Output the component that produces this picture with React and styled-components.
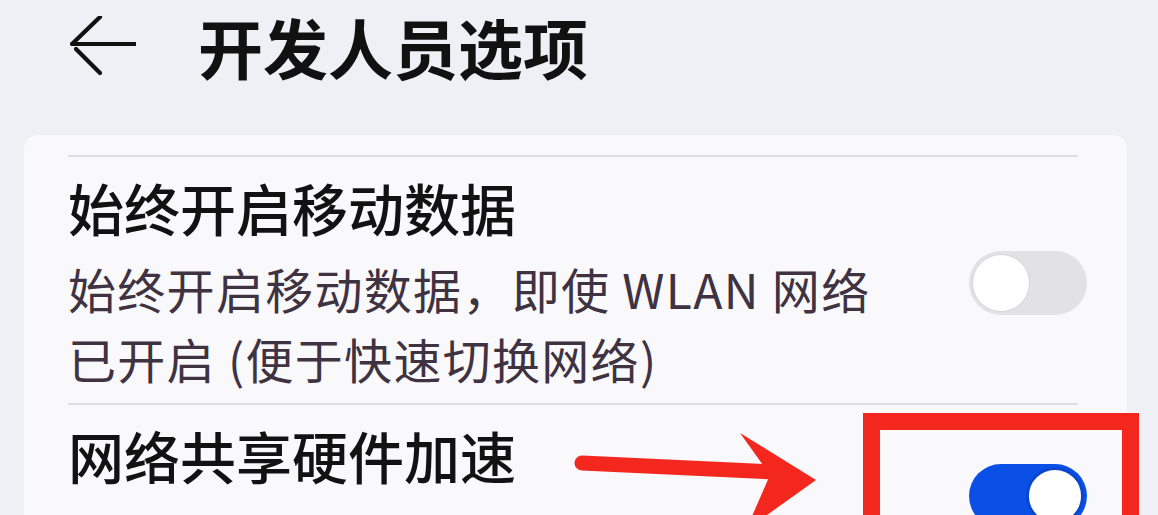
import React from "react";
import styled, { createGlobalStyle } from "styled-components";

const Global = createGlobalStyle`
  html, body { margin: 0; padding: 0; background: #eff0f5; }
  body { font-family: "Noto Sans CJK SC", "Noto Sans", sans-serif; overflow: hidden; }
  #root { width: 1158px; height: 515px; overflow: hidden; }
`;

const Page = styled.div`
  position: relative;
  width: 1158px;
  height: 515px;
  overflow: hidden;
  background: #eff0f5;
  padding: 0 31px 0 24px;
  box-sizing: border-box;
`;

const Header = styled.header`
  display: flex;
  align-items: center;
  height: 92px;
  padding-left: 46px;
  gap: 62px;
`;

const Title = styled.h1`
  margin: 0;
  font-size: 65px;
  line-height: 1;
  font-weight: 700;
  color: #111;
  letter-spacing: 0;
`;

const Card = styled.section`
  margin-top: 43px;
  background: #f9f9fb;
  border-radius: 14px;
  padding: 20px 40px 0 44px;
`;

const Divider = styled.div`
  height: 2px;
  background: #dedee2;
  margin-right: 9px;
`;

const Item = styled.div`
  display: flex;
  align-items: center;
  justify-content: space-between;
  padding: 15px 0 10px;
`;

const TextCol = styled.div`
  display: flex;
  flex-direction: column;
  gap: 11px;
`;

const ItemTitle = styled.div`
  font-size: 56px;
  line-height: 70px;
  font-weight: 500;
  color: #121212;
  white-space: nowrap;
`;

const ItemSub = styled.div`
  font-size: 48px;
  line-height: 70px;
  font-weight: 400;
  letter-spacing: 1.3px;
  color: #3f3241;
  white-space: nowrap;
`;

const Switch = styled.div`
  position: relative;
  flex: none;
  width: 118px;
  height: 64px;
  border-radius: 32px;
  box-sizing: border-box;
  background: ${(p) => (p.on ? "#0a4fe6" : "#e2e2e5")};
  &::after {
    content: "";
    position: absolute;
    top: 3px;
    ${(p) => (p.on ? "right: 3px;" : "left: 3px;")}
    width: 58px;
    height: 58px;
    border-radius: 50%;
    background: #fff;
    box-sizing: border-box;
    border: ${(p) => (p.on ? "3px solid #0a46d0" : "1px solid #d6d6d8")};
  }
`;

const Highlight = styled.div`
  position: absolute;
  left: 863px;
  top: 413px;
  width: 276px;
  height: 140px;
  border: 17px solid #f4271f;
  box-sizing: border-box;
  pointer-events: none;
`;

const ArrowLayer = styled.svg`
  position: absolute;
  left: 560px;
  top: 420px;
  pointer-events: none;
`;

const BackIcon = () => (
  <svg width="66" height="60" viewBox="0 0 66 60" fill="none">
    <path d="M30 1 L2 28 L65 28" stroke="#111" strokeWidth="4.2" strokeLinecap="round" strokeLinejoin="round" />
    <path d="M6 33 L30 57" stroke="#111" strokeWidth="4.2" strokeLinecap="round" />
  </svg>
);

export default function App() {
  return (
    <>
      <Global />
      <Page>
        <Header>
          <BackIcon />
          <Title>开发人员选项</Title>
        </Header>
        <Card>
          <Divider />
          <Item>
            <TextCol>
              <ItemTitle>始终开启移动数据</ItemTitle>
              <ItemSub>
                始终开启移动数据，即使 WLAN 网络
                <br />
                已开启 (便于快速切换网络)
              </ItemSub>
            </TextCol>
            <Switch />
          </Item>
          <Divider />
          <Item>
            <TextCol>
              <ItemTitle>网络共享硬件加速</ItemTitle>
              <ItemSub>使用网络共享硬件加速功能</ItemSub>
            </TextCol>
            <Switch on />
          </Item>
        </Card>
        <Highlight />
        <ArrowLayer width="270" height="95" viewBox="0 0 270 95">
          <path d="M22 43 L215 52" stroke="#f4271f" strokeWidth="15" strokeLinecap="round" />
          <path d="M180 13 L256 60 L186 110 L210 55 Z" fill="#f4271f" />
        </ArrowLayer>
      </Page>
    </>
  );
}
